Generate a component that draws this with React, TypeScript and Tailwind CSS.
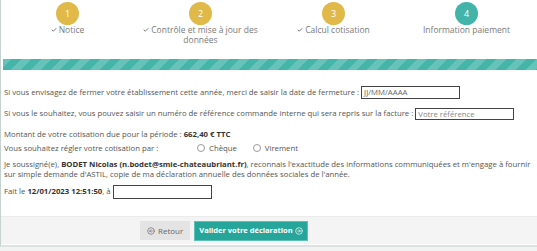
import React from "react";
import { Check, CircleArrowLeft, CircleArrowRight } from "lucide-react";

const steps = [
  { n: "1", label: "Notice", done: true },
  { n: "2", label: "Contrôle et mise à jour des données", done: true },
  { n: "3", label: "Calcul cotisation", done: true },
  { n: "4", label: "Information paiement", done: false },
];

const Radio = ({ label }: { label: string }) => (
  <label className="flex items-center gap-[4px]">
    <span className="w-[8px] h-[8px] rounded-full border border-[#9a9a9a] bg-white" />
    <span>{label}</span>
  </label>
);

const App = () => {
  return (
    <div className="w-[537px] h-[251px] overflow-hidden bg-[#f1f2f2] font-['Open_Sans',sans-serif] text-[7.75px] text-[#555]">
      <div className="w-[545px] bg-white border-l border-[#c6d2d0] border-b-2 border-b-[#dbe2e1]">
        {/* steps */}
        <div className="grid grid-cols-4 w-[532px] pt-[2px] h-[59px]">
          {steps.map((s) => (
            <div key={s.n} className="flex flex-col items-center">
              <div
                className={
                  "w-[23px] h-[23px] rounded-full flex items-center justify-center text-white text-[9px] " +
                  (s.done ? "bg-[#e0b948]" : "bg-[#43b4aa]")
                }
              >
                {s.n}
              </div>
              <div className="text-center text-[8.5px] leading-[10px] text-[#7a7a7a] max-w-[118px]">
                {s.done && <Check size={6} strokeWidth={4} className="inline mr-[2px] mb-[1px]" />}
                {s.label}
              </div>
            </div>
          ))}
        </div>

        {/* progress */}
        <div className="ml-[2px] h-[11px] bg-[repeating-linear-gradient(-45deg,#45b5aa_0px,#45b5aa_7px,#65c3b9_7px,#65c3b9_14px)]" />

        {/* form */}
        <div className="pl-[3px] pt-[16px]">
          <div className="flex items-center h-[13px]">
            <span>Si vous envisagez de fermer votre établissement cette année, merci de saisir la date de fermeture :</span>
            <div className="ml-[2px] w-[99px] h-[13px] border border-[#444] px-[2px] leading-[11px] text-[#666]">JJ/MM/AAAA</div>
          </div>
          <div className="flex items-center h-[12px] mt-[9px]">
            <span>Si vous le souhaitez, vous pouvez saisir un numéro de référence commande interne qui sera repris sur la facture :</span>
            <div className="ml-[2px] w-[99px] h-[12px] border border-[#444] px-[2px] leading-[10px] text-[#888]">Votre référence</div>
          </div>
          <div className="mt-[8px] leading-[12px]">
            Montant de votre cotisation due pour la période : <b className="text-[#333]">662,40 € TTC</b>
          </div>
          <div className="mt-[2px] flex items-center leading-[12px]">
            <span className="w-[193px]">Vous souhaitez régler votre cotisation par :</span>
            <div className="flex gap-[16px]">
              <Radio label="Chèque" />
              <Radio label="Virement" />
            </div>
          </div>
          <div className="mt-[5px] leading-[10px] w-[530px]">
            Je soussigné(e), <b className="text-[#333]">BODET Nicolas (n.bodet@smie-chateaubriant.fr)</b>, reconnais l'exactitude des informations communiquées et m'engage à fournir sur simple demande d'ASTIL, copie de ma déclaration annuelle des données sociales de l'année.
          </div>
          <div className="mt-[6px] flex items-center h-[14px]">
            <span>
              Fait le <b className="text-[#333]">12/01/2023 12:51:50</b>, à
            </span>
            <div className="ml-[2px] w-[99px] h-[14px] border border-[#444]" />
          </div>
        </div>

        {/* footer */}
        <div className="mt-[17px] h-[29px] bg-[#f4f4f4] border-t border-[#ebebeb] border-b border-b-white flex items-center pl-[139px] gap-[4px]">
          <button className="h-[19px] px-[7px] bg-[#e4e4e4] text-[#666] text-[8px] flex items-center gap-[3px]">
            <CircleArrowLeft size={8} strokeWidth={2} />
            Retour
          </button>
          <button className="h-[20px] px-[4px] bg-[#26a69a] border border-[#5cc0b5] text-white font-bold text-[7.5px] flex items-center gap-[2px]">
            Valider votre déclaration
            <CircleArrowRight size={8} strokeWidth={2} />
          </button>
        </div>
      </div>
    </div>
  );
};

export default App;
